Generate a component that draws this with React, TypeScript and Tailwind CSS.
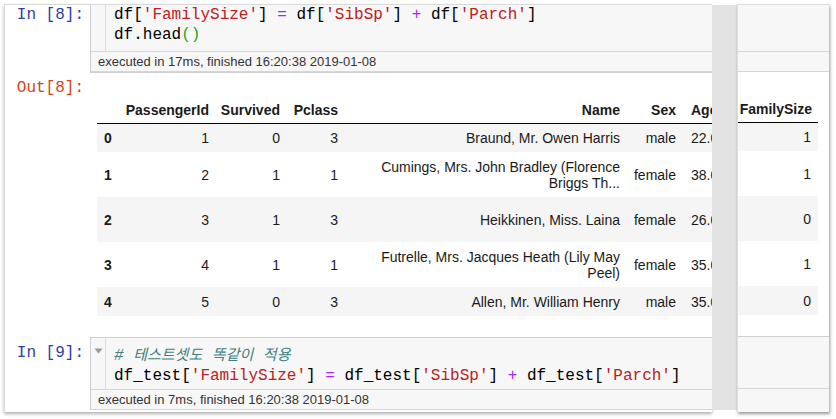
import React from 'react';

const mono = { fontFamily: '"Liberation Mono", "DejaVu Sans Mono", monospace' };
const sans = { fontFamily: '"Liberation Sans", Arial, sans-serif' };
const kr = { fontFamily: '"Noto Sans CJK KR", sans-serif' };

function S({ children }: { children: React.ReactNode }) {
  return <span className="text-[#ba2121]">{children}</span>;
}

function Op({ children }: { children: React.ReactNode }) {
  return <span className="text-[#aa22ff]">{children}</span>;
}

interface Row {
  idx: string;
  pid: string;
  survived: string;
  pclass: string;
  name: React.ReactNode;
  sex: string;
  age: string;
  family: string;
  tall: boolean;
}

const rows: Row[] = [
  { idx: '0', pid: '1', survived: '0', pclass: '3', name: 'Braund, Mr. Owen Harris', sex: 'male', age: '22.0', family: '1', tall: false },
  {
    idx: '1', pid: '2', survived: '1', pclass: '1',
    name: (<>Cumings, Mrs. John Bradley (Florence<br />Briggs Th...</>),
    sex: 'female', age: '38.0', family: '1', tall: true,
  },
  { idx: '2', pid: '3', survived: '1', pclass: '3', name: 'Heikkinen, Miss. Laina', sex: 'female', age: '26.0', family: '0', tall: true },
  {
    idx: '3', pid: '4', survived: '1', pclass: '1',
    name: (<>Futrelle, Mrs. Jacques Heath (Lily May<br />Peel)</>),
    sex: 'female', age: '35.0', family: '1', tall: true,
  },
  { idx: '4', pid: '5', survived: '0', pclass: '3', name: 'Allen, Mr. William Henry', sex: 'male', age: '35.0', family: '0', tall: false },
];

function rowHeight(r: Row, i: number) {
  if (r.tall) return 'h-[45px]';
  return i === 0 ? 'h-[28px]' : 'h-[29px]';
}

function ExecRow({ text }: { text: string }) {
  return (
    <div className="h-[20px] leading-[20px] pl-[7px] text-[13px] text-[#333] bg-[#f7f7f7] border-b border-[#d6d6d6] whitespace-nowrap" style={sans}>
      {text}
    </div>
  );
}

function Prompt({ label, color, pt }: { label: string; color: string; pt: string }) {
  return (
    <div className={`w-[85px] shrink-0 text-right pr-[6px] text-[16px] leading-[19.5px] ${color} ${pt}`} style={mono}>
      {label}
    </div>
  );
}

function LeftTable() {
  return (
    <div className="text-[14px] leading-[16px] text-[#1a1a1a] ml-[7px] w-[700px]" style={sans}>
      <div className="flex items-end h-[29px] border-b border-black font-bold pb-[5px]">
        <div className="w-[23px] shrink-0" />
        <div className="w-[96px] shrink-0 text-right pr-[7px]">PassengerId</div>
        <div className="w-[71px] shrink-0 text-right pr-[7px]">Survived</div>
        <div className="w-[58px] shrink-0 text-right pr-[7px]">Pclass</div>
        <div className="w-[282px] shrink-0 text-right pr-[7px]">Name</div>
        <div className="w-[56px] shrink-0 text-right pr-[7px]">Sex</div>
        <div className="w-[40px] shrink-0 text-left pl-[8px]">Age</div>
      </div>
      {rows.map((r, i) => (
        <div key={r.idx} className={`flex items-center ${rowHeight(r, i)} ${i % 2 === 0 ? 'bg-[#f5f5f5]' : 'bg-white'}`}>
          <div className="w-[23px] shrink-0 pl-[7px] font-bold">{r.idx}</div>
          <div className="w-[96px] shrink-0 text-right pr-[7px]">{r.pid}</div>
          <div className="w-[71px] shrink-0 text-right pr-[7px]">{r.survived}</div>
          <div className="w-[58px] shrink-0 text-right pr-[7px]">{r.pclass}</div>
          <div className="w-[282px] shrink-0 text-right pr-[7px] whitespace-nowrap">{r.name}</div>
          <div className="w-[56px] shrink-0 text-right pr-[7px]">{r.sex}</div>
          <div className="w-[40px] shrink-0 text-left pl-[8px] whitespace-nowrap">{r.age}</div>
        </div>
      ))}
    </div>
  );
}

function LeftWindow() {
  return (
    <div className="w-[708px] h-[408px] shrink-0 bg-white border-l border-t border-[#d9d9d9] overflow-hidden flex flex-col shadow-[0_2px_3px_rgba(0,0,0,0.3)]">
      {/* In [8] */}
      <div className="flex">
        <Prompt label="In [8]:" color="text-[#303f9f]" pt="pt-[1px]" />
        <div className="flex-1 border-l border-b border-[#cfcfcf] bg-[#f7f7f7] min-w-0">
          <div className="flex h-[47px] border-b border-[#d6d6d6]">
            <div className="w-[15px] shrink-0 border-r border-[#dddddd]" />
            <div className="pl-[8px] pt-[1px] text-[16px] leading-[19.5px] text-black whitespace-nowrap" style={mono}>
              <div>df[<S>'FamilySize'</S>] <Op>=</Op> df[<S>'SibSp'</S>] <Op>+</Op> df[<S>'Parch'</S>]</div>
              <div>df.head<span className="text-[#22a822]">()</span></div>
            </div>
          </div>
          <ExecRow text="executed in 17ms, finished 16:20:38 2019-01-08" />
        </div>
      </div>

      {/* Out [8] */}
      <div className="flex h-[264px]">
        <Prompt label="Out[8]:" color="text-[#d84315]" pt="pt-[6px]" />
        <div className="pt-[22px]">
          <LeftTable />
        </div>
      </div>

      {/* In [9] */}
      <div className="flex">
        <Prompt label="In [9]:" color="text-[#303f9f]" pt="pt-[7px]" />
        <div className="flex-1 border-l border-t border-[#cfcfcf] bg-[#f7f7f7] min-w-0">
          <div className="flex h-[52px] border-b border-[#d6d6d6]">
            <div className="w-[15px] shrink-0 border-r border-[#dddddd] flex justify-center pt-[10px]">
              <svg width="9" height="6" viewBox="0 0 9 6">
                <path d="M0.5 0.5 L8.5 0.5 L4.5 5.5 Z" fill="#9a9a9a" />
              </svg>
            </div>
            <div className="pl-[8px] pt-[6px] text-[16px] leading-[19.5px] text-black whitespace-nowrap" style={mono}>
              <div className="italic text-[#408080]">
                #{' '}
                <span className="text-[15px]" style={kr}>테스트셋도</span>{' '}
                <span className="text-[15px]" style={kr}>똑같이</span>{' '}
                <span className="text-[15px]" style={kr}>적용</span>
              </div>
              <div>df_test[<S>'FamilySize'</S>] <Op>=</Op> df_test[<S>'SibSp'</S>] <Op>+</Op> df_test[<S>'Parch'</S>]</div>
            </div>
          </div>
          <ExecRow text="executed in 7ms, finished 16:20:38 2019-01-08" />
        </div>
      </div>
    </div>
  );
}

function RightWindow() {
  return (
    <div className="w-[92px] h-[408px] shrink-0 bg-white border-t border-l border-[#dddddd] overflow-hidden flex flex-col shadow-[1px_2px_3px_rgba(0,0,0,0.4)]">
      <div className="h-[47px] bg-[#f7f7f7] border-b border-[#d6d6d6]" />
      <div className="h-[20px] bg-[#f7f7f7] border-b border-[#d6d6d6]" />
      <div className="h-[264px] pt-[22px]">
        <div className="w-[80px] text-[14px] leading-[16px] text-[#1a1a1a]" style={sans}>
          <div className="flex items-end justify-end h-[29px] border-b border-black font-bold pb-[5px] pr-[6px]">FamilySize</div>
          {rows.map((r, i) => (
            <div
              key={r.idx}
              className={`flex items-center justify-end pr-[7px] ${rowHeight(r, i)} ${i % 2 === 0 ? 'bg-[#f5f5f5]' : 'bg-white'}`}
            >
              {r.family}
            </div>
          ))}
        </div>
      </div>
      <div className="border-t border-[#cfcfcf] bg-[#f7f7f7] flex-1">
        <div className="h-[52px] border-b border-[#d6d6d6]" />
      </div>
    </div>
  );
}

export default function App() {
  return (
    <div className="w-[836px] h-[419px] bg-white flex items-start pt-[4px] pl-[4px] overflow-hidden">
      <LeftWindow />
      <div className="w-[25px] h-[405px] mt-[1px] shrink-0 bg-[#e3e3e3]" />
      <RightWindow />
    </div>
  );
}
